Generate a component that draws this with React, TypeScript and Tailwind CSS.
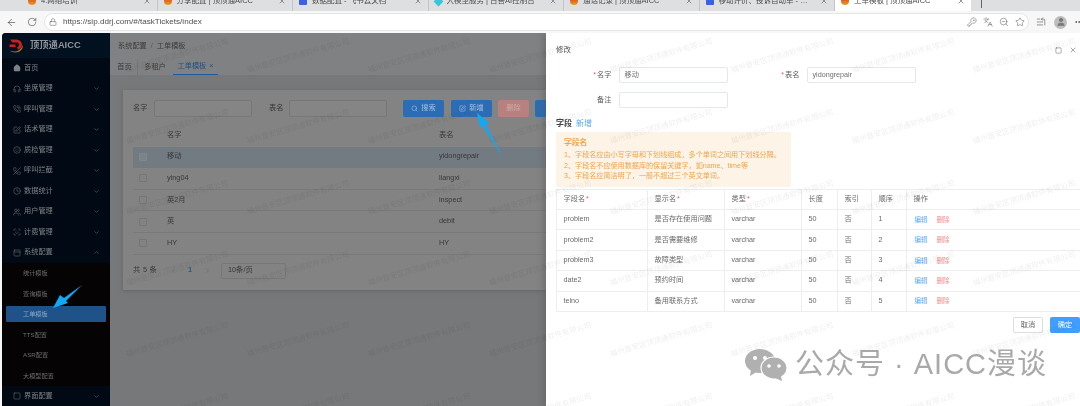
import React from "react";
import {
  ArrowLeft, RotateCw, Lock, KeyRound, Languages, ZoomOut, Star, ListStart, MoreHorizontal, X, Square,
  Home, Headphones, PhoneCall, SquarePen, Smile, PhoneOff, Clock, Users, ScanFace, PanelTop, ChevronDown, ChevronUp, ChevronLeft, ChevronRight, Search, User,
} from "lucide-react";

const tabs = [
  { t: "4.网络培训", c: "red" },
  { t: "分享配置 | 顶顶通AICC", c: "red" },
  { t: "数据配置 - 飞书云文档", c: "blue" },
  { t: "大模型服务 | 百善AI控制台", c: "cyan" },
  { t: "通话记录 | 顶顶通AICC", c: "red" },
  { t: "移动评价、投诉自动单 - 飞书云文", c: "blue" },
  { t: "工单模板 | 顶顶通AICC", c: "red", active: true },
];

const menu = [
  { t: "首页", I: Home, home: true },
  { t: "坐席管理", I: Headphones },
  { t: "呼叫管理", I: PhoneCall },
  { t: "话术管理", I: SquarePen },
  { t: "质检管理", I: Smile },
  { t: "呼叫拦截", I: PhoneOff },
  { t: "数据统计", I: Clock },
  { t: "用户管理", I: Users },
  { t: "计费管理", I: ScanFace },
];
const sub = ["统计模板", "查询模板", "工单模板", "TTS配置", "ASR配置", "大模型配置"];
const leftRows = [
  ["移动", "yidongrepair"],
  ["ying04", "liangxi"],
  ["英2月", "inspect"],
  ["英", "debit"],
  ["HY", "HY"],
];
const fieldRows = [
  ["problem", "是否存在使用问题", "1"],
  ["problem2", "是否需要维修", "2"],
  ["problem3", "故障类型", "3"],
  ["date2", "预约时间", "4"],
  ["telno", "备用联系方式", "5"],
];
const xs = [3, 124, 245, 366, 487, 608, 729, 850, 971];
const ys = [-54, 17, 88, 159, 230, 301, 372];

function Favicon({ c }: { c: string }) {
  if (c === "blue") return <span className="w-[8px] h-[8px] rounded-[1px] bg-[#3a62e0] shrink-0" />;
  if (c === "cyan") return <span className="w-[7px] h-[7px] rotate-45 bg-[#39c6d8] shrink-0" />;
  return <span className="w-[8px] h-[8px] rounded-full bg-gradient-to-b from-[#d8261c] to-[#e8a020] shrink-0" />;
}

function Field({ label, value, star, w }: { label: string; value?: string; star?: boolean; w: string }) {
  return (
    <div className="flex items-center shrink-0">
      <span className="w-[41px] shrink-0 text-[#e86060] text-[7px] text-right pr-[1px]">{star ? "*" : ""}</span>
      <span className="w-[20px] text-[#5c5c5c] text-[7.2px] shrink-0">{label}</span>
      <div className={`h-[16px] ${w} shrink-0 ml-[1.5px] border border-[#e4e7ed] rounded-[2px] px-[5px] flex items-center text-[7.2px] text-[#707070]`}>{value}</div>
    </div>
  );
}

function Cell({ w, children, className = "" }: { w: string; children?: React.ReactNode; className?: string }) {
  return <div className={`${w} h-full shrink-0 flex items-center pl-[6.5px] border-l border-[#eceef4] ${className}`}>{children}</div>;
}

export default function App() {
  return (
    <div className="relative w-[1080px] h-[406px] overflow-hidden flex flex-col bg-[#f7f7f7] blur-[0.3px] font-['Liberation_Sans','Noto_Sans_CJK_SC',sans-serif]">
      {/* browser tabs */}
      <div className="h-[11px] shrink-0 bg-[#dedfe1] flex items-end pl-[22px] overflow-hidden">
        {tabs.map((tab, i) => (
          <div
            key={i}
            className={`w-[135.5px] h-[20px] shrink-0 flex items-center pl-[6px] pr-[6px] gap-[5px] text-[7.5px] text-[#4a4a4a] ${tab.active ? "bg-white rounded-t-[6px]" : "border-r border-[#c4c5c7]"}`}
          >
            <Favicon c={tab.c} />
            <span className="flex-1 truncate">{tab.t}</span>
            <X size={8} className="text-[#666] shrink-0" />
          </div>
        ))}
        <div className="w-[11px] h-[8px] self-start border-r border-[#666]" />
      </div>
      {/* address bar */}
      <div className="h-[22px] shrink-0 flex items-center bg-[#f7f7f7] pl-[6px] text-[#444]">
        <ArrowLeft size={11} strokeWidth={1.4} className="w-[11px] shrink-0" />
        <RotateCw size={10} strokeWidth={1.4} className="ml-[10px] shrink-0" />
        <div className="ml-[7px] w-[985px] shrink-0 h-[18px] rounded-full bg-white border border-[#e6e6e6] flex items-center pl-[4px] pr-[3px] text-[#555]">
          <Lock size={8} strokeWidth={1.5} />
          <span className="ml-[6px] text-[8.1px] text-[#4f4f4f] flex-1">https://sip.ddrj.com/#/taskTickets/index</span>
          <KeyRound size={10} strokeWidth={1.2} />
          <Languages size={10} strokeWidth={1.2} className="ml-[6px]" />
          <ZoomOut size={10} strokeWidth={1.2} className="ml-[6px]" />
          <Star size={10} strokeWidth={1.2} className="ml-[6px]" />
        </div>
        <ListStart size={10} strokeWidth={1.3} className="ml-[7px] shrink-0" />
        <div className="ml-[8px] w-[13px] h-[13px] rounded-full bg-[#bdbdbd] flex items-center justify-center shrink-0">
          <User size={10} fill="#777" stroke="#777" />
        </div>
        <MoreHorizontal size={10} className="ml-[7px] shrink-0" />
      </div>
      {/* page */}
      <div className="relative flex-1 min-h-0 flex pl-[2px] overflow-hidden">
        {/* sidebar */}
        <div className="relative z-10 w-[108px] shrink-0 bg-[#010a14] rounded-tl-[4px] flex flex-col overflow-hidden">
          <div className="h-[25px] shrink-0 bg-[#021120] flex items-center pl-[7px]">
            <svg width="15" height="14" viewBox="0 0 15 14">
              <path d="M1 0.5h6.5a5.5 5.2 0 0 1 5.5 5.2 5.5 5 0 0 1-4 4.8L8 8a2.4 2.4 0 0 0 .6-4.6H3.5z M0.5 5.5h6v2.5h-6z" fill="#c8211c" />
              <path d="M1 11.5c4 2.2 10 1.5 12.8-5.5.8 4-3 7.5-7.5 7.5-2.4 0-4.4-.8-5.3-2z" fill="#a57a14" />
            </svg>
            <span className="ml-[6px] text-[9.3px] font-bold text-[#8f949a]">顶顶通AICC</span>
          </div>
          {menu.map((m) => (
            <div key={m.t} className="h-[20.5px] shrink-0 flex items-center pl-[11px] pr-[10px] text-[#7d8185] text-[7.2px]">
              <m.I size={8} strokeWidth={1.4} fill={m.home ? "#7d8185" : "none"} className="shrink-0" />
              <span className="ml-[3px] flex-1">{m.t}</span>
              {!m.home && <ChevronDown size={7} className="text-[#656a70]" />}
            </div>
          ))}
          <div className="h-[20.5px] shrink-0 flex items-center pl-[11px] pr-[10px] text-[#7d8185] text-[7.2px]">
            <PanelTop size={8} strokeWidth={1.4} className="shrink-0" />
            <span className="ml-[3px] flex-1">系统配置</span>
            <ChevronUp size={7} className="text-[#656a70]" />
          </div>
          <div className="shrink-0 bg-[#050304] h-[123px] flex flex-col pt-[2px]">
            {sub.map((s, i) => (
              <div
                key={s}
                className={`h-[16px] shrink-0 mx-[4px] mb-[4.5px] flex items-center pl-[17px] text-[6.2px] rounded-[1px] ${i === 2 ? "bg-[#1f5288] text-[#8ea6c0]" : "text-[#6e6e6e]"}`}
              >
                {s}
              </div>
            ))}
          </div>
          <div className="h-[20.5px] shrink-0 flex items-center pl-[11px] pr-[10px] text-[#7d8185] text-[7.2px]">
            <Square size={8} strokeWidth={1.4} className="shrink-0" />
            <span className="ml-[3px] flex-1">界面配置</span>
            <ChevronDown size={7} className="text-[#656a70]" />
          </div>
        </div>

        {/* dimmed main area */}
        <div className="w-[436px] shrink-0 bg-[#76787a] flex flex-col overflow-hidden">
          <div className="h-[26px] shrink-0 bg-[#808182] flex items-center pl-[8px] text-[7.2px] text-[#3c3c3c]">
            系统配置<span className="mx-[4px] text-[#555]">/</span>工单模板
          </div>
          <div className="h-[16px] shrink-0 bg-[#808182] flex text-[7.2px] text-[#3a3a3a]">
            <div className="w-[28px] pl-[2px] flex items-center justify-center border-r border-[#777]">首页</div>
            <div className="w-[34px] flex items-center justify-center">多租户</div>
            <div className="ml-[1px] w-[45px] flex items-center justify-center gap-[3px] text-[#1f5288] border-b border-[#1f5a9c]">
              工单模板<span>×</span>
            </div>
          </div>
          <div className="mt-[15px] ml-[13px] w-[424px] h-[200px] shrink-0 bg-[#838383] shadow-[0_1px_4px_#55555588] pt-[10px] pl-[10px] overflow-hidden">
            <div className="h-[17px] flex items-center text-[7.2px] text-[#363636] whitespace-nowrap">
              <span className="w-[21px] shrink-0">名字</span>
              <div className="w-[98px] shrink-0 h-full border border-[#777] rounded-[2px] bg-[#858585]" />
              <span className="ml-[17px] w-[20px] shrink-0">表名</span>
              <div className="w-[98px] shrink-0 h-full border border-[#777] rounded-[2px] bg-[#858585]" />
              <div className="ml-[16px] w-[41px] shrink-0 h-full rounded-[2px] bg-[#2c6cb4] flex items-center justify-center gap-[3px] text-[#a7c2de]">
                <Search size={7} />搜索
              </div>
              <div className="ml-[7px] w-[41px] shrink-0 h-full rounded-[2px] bg-[#2c6cb4] flex items-center justify-center gap-[3px] text-[#a7c2de]">
                <SquarePen size={7} />新增
              </div>
              <div className="ml-[6px] w-[31px] shrink-0 h-full rounded-[2px] bg-[#b98080] flex items-center justify-center text-[#cfaaaa]">删除</div>
              <div className="ml-[6px] w-[41px] h-full rounded-[2px] bg-[#2c6cb4] shrink-0" />
            </div>
            <div className="mt-[8px] text-[7.3px] text-[#383838]">
              <div className="h-[21.6px] flex items-center">
                <span className="w-[34px] shrink-0" />
                <span className="w-[272px] shrink-0">名字</span>
                <span>表名</span>
              </div>
              {leftRows.map((r, i) => (
                <div key={i} className={`h-[21.6px] flex items-center border-b border-[#797979] ${i === 0 ? "bg-[#727a82]" : ""}`}>
                  <span className="w-[34px] shrink-0 pl-[6px]">
                    <span className={`block w-[8px] h-[8px] rounded-[1px] border ${i === 0 ? "border-[#7f878f] bg-[#7b8289]" : "border-[#757575]"}`} />
                  </span>
                  <span className="w-[272px] shrink-0">{r[0]}</span>
                  <span>{r[1]}</span>
                </div>
              ))}
            </div>
            <div className="mt-[8px] h-[16px] flex items-center text-[7.3px] text-[#383838]">
              <span className="w-[23px] shrink-0 tracking-[0.3px] whitespace-nowrap">共 5 条</span>
              <ChevronLeft size={7} className="ml-[14px] text-[#666] shrink-0" />
              <span className="ml-[11px] w-[4px] shrink-0 text-[#1f5a9c] font-bold">1</span>
              <ChevronRight size={7} className="ml-[12px] text-[#666] shrink-0" />
              <div className="ml-[10px] w-[65px] shrink-0 h-full border border-[#777] rounded-[2px] flex items-center pl-[6px]">10条/页</div>
            </div>
          </div>
        </div>

        {/* drawer */}
        <div className="relative flex-1 min-w-0 bg-white flex flex-col pl-[10px] shadow-[-3px_0_6px_#55555566]">
          <div className="h-[34px] shrink-0 flex items-center text-[7.4px] text-[#555]">
            <span className="flex-1">修改</span>
            <Square size={7} strokeWidth={1.3} className="text-[#333]" />
            <X size={8} strokeWidth={1.3} className="ml-[7px] mr-[3px] text-[#333]" />
          </div>
          <div className="flex">
            <Field label="名字" value="移动" star w="w-[109px]" />
            <div className="ml-[16.5px] shrink-0">
              <Field label="表名" value="yidongrepair" star w="w-[109px]" />
            </div>
          </div>
          <div className="mt-[9px]">
            <Field label="备注" w="w-[109px]" />
          </div>
          <div className="mt-[11px] h-[10px] flex items-center text-[8px]">
            <span className="font-bold text-[#444]">字段</span>
            <span className="ml-[4px] text-[#5aa8f5]">新增</span>
          </div>
          <div className="mt-[3px] w-[235px] h-[55px] shrink-0 bg-[#fdf3e6] rounded-[2px] pl-[8px] pt-[5px] text-[#eda54e] text-[7.1px]">
            <div className="text-[7.8px] font-bold h-[11px] flex items-center">字段名</div>
            <div className="mt-[2.5px] h-[10.5px] flex items-center whitespace-nowrap">1、字段名应由小写字母和下划线组成，多个单词之间用下划线分隔。</div>
            <div className="h-[10.5px] flex items-center whitespace-nowrap">2、字段名不应使用数据库的保留关键字，如name、time等</div>
            <div className="h-[10.5px] flex items-center whitespace-nowrap">3、字段名应简洁明了，一般不超过三个英文单词。</div>
          </div>
          <div className="mt-[2px] border-t border-[#eceef4] text-[7.2px] text-[#6a6a6a]">
            <div className="h-[20px] flex border-b border-[#eceef4]">
              <Cell w="w-[91px]"><span>字段名</span><span className="ml-[1px] text-[#e86060]">*</span></Cell>
              <Cell w="w-[77px]"><span>显示名</span><span className="ml-[1px] text-[#e86060]">*</span></Cell>
              <Cell w="w-[77px]"><span>类型</span><span className="ml-[1px] text-[#e86060]">*</span></Cell>
              <Cell w="w-[36px]">长度</Cell>
              <Cell w="w-[34px]">索引</Cell>
              <Cell w="w-[35px]">顺序</Cell>
              <Cell w="flex-1 min-w-0">操作</Cell>
            </div>
            {fieldRows.map((r) => (
              <div key={r[0]} className="h-[20.4px] flex border-b border-[#eceef4]">
                <Cell w="w-[91px]">{r[0]}</Cell>
                <Cell w="w-[77px]">{r[1]}</Cell>
                <Cell w="w-[77px]">varchar</Cell>
                <Cell w="w-[36px]">50</Cell>
                <Cell w="w-[34px]">否</Cell>
                <Cell w="w-[35px]">{r[2]}</Cell>
                <Cell w="flex-1 min-w-0">
                  <span className="ml-[1px] text-[6.5px] text-[#5aa8f5]">编辑</span>
                  <span className="ml-[9px] text-[6.5px] text-[#f08a8a]">删除</span>
                </Cell>
              </div>
            ))}
          </div>
          <div className="mt-[5px] flex justify-end gap-[7px] text-[7.2px]">
            <div className="w-[30px] h-[16px] border border-[#dcdfe6] rounded-[2px] flex items-center justify-center text-[#666]">取消</div>
            <div className="w-[30px] h-[16px] bg-[#409eff] rounded-[2px] flex items-center justify-center text-white">确定</div>
          </div>
        </div>

        {/* watermark grid over content, behind the sidebar */}
        {ys.map((y) =>
          xs.map((x) => (
            <span
              key={`${x}-${y}`}
              className="absolute pointer-events-none text-[7.6px] text-[#00000012] -rotate-[16deg] whitespace-nowrap"
              style={{ left: x, top: y }}
            >
              福州晋安区顶顶通软件有限公司
            </span>
          ))
        )}

        {/* annotation arrows */}
        <svg className="absolute left-0 top-[-33px] z-20 pointer-events-none" width="560" height="406" viewBox="0 0 560 406">
          <polygon points="477,113 489,123 486,125 503,158 482,125 480,128" fill="#12a8f5" />
          <polygon points="53,308 60,295 64,298 82,285 66,301 68,303" fill="#12a8f5" />
        </svg>

        {/* public-account mark */}
        <div className="absolute z-20 left-[745px] top-[310px] flex items-center pointer-events-none text-[#a9a9a9]">
          <svg width="43" height="34" viewBox="0 0 43 32">
            <ellipse cx="15" cy="12" rx="15" ry="12" fill="#b0b0b0" />
            <path d="M6 20 L5 27 L13 22z" fill="#b0b0b0" />
            <circle cx="10" cy="9" r="2" fill="#fff" />
            <circle cx="20" cy="9" r="2" fill="#fff" />
            <ellipse cx="29" cy="19" rx="13" ry="11" fill="#b0b0b0" stroke="#fff" strokeWidth="1.2" />
            <path d="M36 27 L37 32 L30 29z" fill="#b0b0b0" />
            <circle cx="24" cy="17" r="1.8" fill="#fff" />
            <circle cx="34" cy="17" r="1.8" fill="#fff" />
          </svg>
          <span className="ml-[7px] text-[29px] tracking-[1px] whitespace-nowrap">公众号 · AICC漫谈</span>
        </div>
      </div>
    </div>
  );
}
